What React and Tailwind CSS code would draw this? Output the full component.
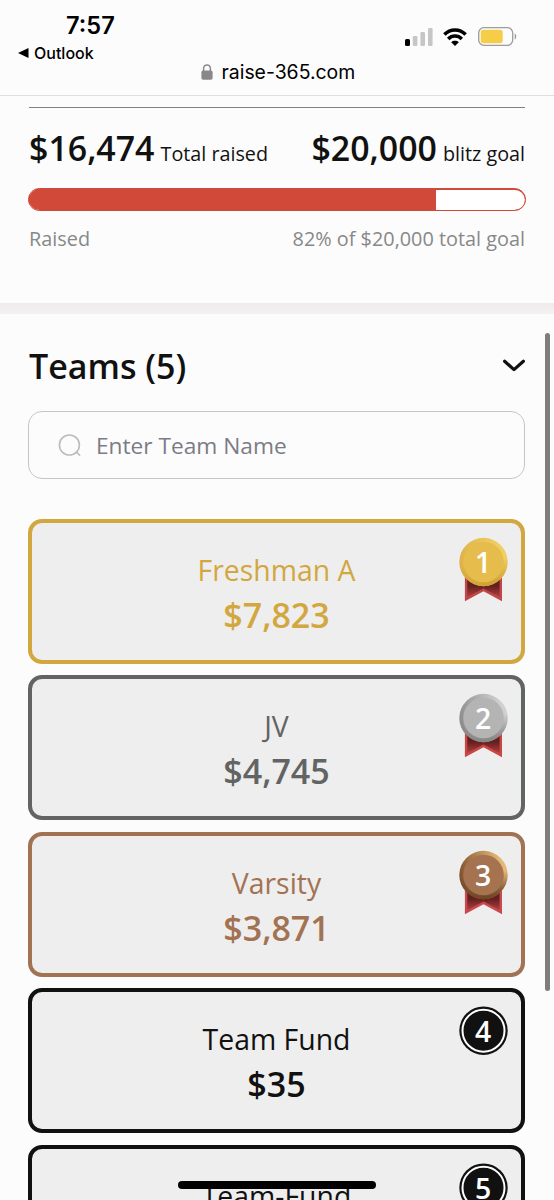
import clsx from "clsx";

const TEAMS = [
  { rank: 1, name: "Freshman A", amount: 7823 },
  { rank: 2, name: "JV", amount: 4745 },
  { rank: 3, name: "Varsity", amount: 3871 },
  { rank: 4, name: "Team Fund", amount: 35 },
  { rank: 5, name: "Team-Fund", amount: 0 }
];

const CARD_COLORS = {
  1: "border-[#d2a73f] text-[#d2a73f]",
  2: "border-[#626463] text-[#626463]",
  3: "border-[#a27352] text-[#a27352]"
};

// rim gradient + inner face for the top three
const MEDALS = {
  1: { from: "#dcb148", mid: "#f0cf62", to: "#cfa034", face: "#e6bd4c", ribbon: "#c04748" },
  2: { from: "#8b8b8b", mid: "#d0d0d0", to: "#858585", face: "#b4b4b4", ribbon: "#cb4544" },
  3: { from: "#7c4f2c", mid: "#e5b878", to: "#6a4022", face: "#a57350", ribbon: "#c84a50" }
};

const money = (n) => "$" + n.toLocaleString("en-US");

/* STATUS ICONS */
function Signal() {
  return (
    <svg width="28" height="18" viewBox="0 0 28 18">
      <rect x="0" y="11" width="5" height="7" rx="1.5" fill="#000" />
      <rect x="7.8" y="8" width="4.6" height="10" rx="1.3" fill="#c6c6c6" />
      <rect x="15.4" y="4" width="4.6" height="14" rx="1.3" fill="#c6c6c6" />
      <rect x="23" y="0" width="4.6" height="18" rx="1.3" fill="#c6c6c6" />
    </svg>
  );
}

function Wifi() {
  return (
    <svg width="24" height="18" viewBox="0 0 24 18" fill="none" stroke="#000" strokeWidth="3.5">
      <path d="M1.4 6.5C7.2 .4 16.8 .4 22.6 6.5" />
      <path d="M5.2 10.9C9 7.1 15 7.1 18.8 10.9" />
      <path d="M8.2 14.2C10.3 12.3 13.7 12.3 15.8 14.2L12 18Z" fill="#000" stroke="none" />
    </svg>
  );
}

function Battery() {
  return (
    <svg width="39" height="19" viewBox="0 0 39 19">
      <rect x=".7" y=".7" width="34" height="17.6" rx="5.2" fill="none" stroke="#9c9ca0" strokeWidth="1.3" />
      <rect x="2.7" y="2.8" width="22" height="13.4" rx="2.6" fill="#f5cd46" />
      <path d="M36.7 6.5C38.8 7.5 38.8 11.5 36.7 12.5Z" fill="#9c9ca0" />
    </svg>
  );
}

function Lock() {
  return (
    <svg width="12" height="16" viewBox="0 0 12 16">
      <path d="M2.6 7V4.5C2.6 -.3 9.4 -.3 9.4 4.5V7" fill="none" stroke="#88888a" strokeWidth="1.5" />
      <rect x=".4" y="6.5" width="11.2" height="9.2" rx="1.7" fill="#88888a" />
    </svg>
  );
}

/* RANK BADGE */
function Badge({ rank }) {
  const medal = MEDALS[rank];
  const id = "rim" + rank;

  return (
    <div className="absolute top-[14px] right-[13.5px] w-[49px] h-[66px] flex justify-center">
      <svg className="absolute inset-0" width="49" height="66" viewBox="0 0 49 66">
        {medal ? (
          <>
            <defs>
              <linearGradient id={id} x1="0" y1=".6" x2="1" y2=".35">
                <stop offset="0" stopColor={medal.from} />
                <stop offset=".9" stopColor={medal.mid} />
                <stop offset="1" stopColor={medal.mid} />
              </linearGradient>
              <linearGradient id={id + "shade"} x1=".4" y1="0" x2=".6" y2="1">
                <stop offset=".5" stopColor={medal.to} stopOpacity="0" />
                <stop offset="1" stopColor={medal.to} />
              </linearGradient>
              <linearGradient id={id + "ribbon"} x1="0" y1="0" x2="0" y2="1">
                <stop offset=".5" stopColor="#64201f" />
                <stop offset="1" stopColor="#b43d3e" />
              </linearGradient>
            </defs>
            <path d="M5.9 38H43V64.3L24.5 54.2L5.9 64.3Z" fill={medal.ribbon} />
            <path d="M8.3 38H40.6V60L24.5 51.6L8.3 60Z" fill={"url(#" + id + "ribbon)"} />
            <circle cx="24.5" cy="25" r="24.2" fill={"url(#" + id + ")"} />
            <circle cx="24.5" cy="25" r="24.2" fill={"url(#" + id + "shade)"} />
            <circle cx="24.5" cy="25" r="20.3" fill={medal.face} />
          </>
        ) : (
          <>
            <circle cx="24.5" cy="24.7" r="24.2" fill="#111" />
            <circle cx="24.5" cy="24.7" r="21" fill="none" stroke="#fff" strokeWidth="2" />
          </>
        )}
      </svg>
      <span className="relative text-[28.4px] leading-[51px] font-[570] text-white">{rank}</span>
    </div>
  );
}

function TeamCard({ team }) {
  return (
    <div
      className={clsx(
        "relative h-[145px] shrink-0 rounded-[14px] border-4 bg-[#eeeeee] pt-[27px] text-center",
        CARD_COLORS[team.rank] || "border-[#111111] text-[#111111]"
      )}
    >
      <div className="text-[28.4px] leading-10">{team.name}</div>
      <div className="mt-[2px] text-[34px] leading-[46px] font-[570]">{money(team.amount)}</div>
      <Badge rank={team.rank} />
    </div>
  );
}

export default function App() {
  return (
    <div className="relative w-[554px] h-[1200px] overflow-hidden bg-[#fcfcfc] text-[#111111] font-['Open_Sans',sans-serif]">

      {/* BROWSER HEADER */}
      <header className="h-[96px] border-b-[1.5px] border-[#dfdfdf] font-['Inter',sans-serif] text-black">
        <div className="flex justify-between h-[62px] pl-[18px] pr-[37px]">
          <div>
            <div className="pl-12 pt-3 text-[23.6px] leading-7 font-semibold">7:57</div>
            <div className="flex items-center gap-[5px] pt-[3px] text-[16px] leading-5 font-[450]">
              <svg width="11" height="10" viewBox="0 0 11 10">
                <path d="M0 5L10.5 0V10Z" />
              </svg>
              Outlook
            </div>
          </div>
          <div className="flex items-center pt-[11px]">
            <Signal />
            <div className="ml-[10px]"><Wifi /></div>
            <div className="ml-[11px]"><Battery /></div>
          </div>
        </div>
        <div className="flex items-center gap-[8.5px] pl-[201px] h-5 text-[19.4px] leading-5">
          <Lock />
          raise-365.com
        </div>
      </header>

      {/* TOTALS */}
      <section className="h-[207px] px-[29px] pt-[11px]">
        <div className="w-[496px] h-px bg-[#808080]" />
        <div className="flex justify-between pt-[19px] leading-[42px]">
          <div className="flex items-baseline gap-[6px]">
            <span className="text-[33.9px] font-[570]">$16,474</span>
            <span className="text-[19.75px]">Total raised</span>
          </div>
          <div className="flex items-baseline gap-[6px]">
            <span className="text-[33.9px] font-[570]">$20,000</span>
            <span className="text-[19.75px]">blitz goal</span>
          </div>
        </div>
        <div className="-ml-px mt-[13px] w-[498px] h-[23px] rounded-full border-[1.5px] border-[#d14a39] bg-[#d14a39] p-[0.5px] overflow-hidden">
          <div className="h-full rounded-r-full bg-white">
            <div className="h-full bg-[#d14a39]" style={{ width: (16474 / 20000) * 100 - 0.2 + "%" }} />
          </div>
        </div>
        <div className="flex justify-between pt-[14px] text-[19.85px] leading-[28px] text-[#888888]">
          <span>Raised</span>
          <span>82% of $20,000 total goal</span>
        </div>
      </section>

      <div className="h-[11px] bg-gradient-to-b from-[#efebec] to-[#f3f1f2]" />

      {/* TEAMS */}
      <section className="px-[29px] pt-[31px]">
        <div className="flex items-center justify-between h-[42px]">
          <h2 className="text-[34px] leading-[42px] font-[570]">Teams (5)</h2>
          <svg width="22" height="14" viewBox="0 0 22 14" fill="none" stroke="#111" strokeWidth="3.2" strokeLinecap="round" strokeLinejoin="round">
            <path d="M1.6 2.2L11 10.6L20.4 2.2" />
          </svg>
        </div>

        <label className="-ml-px mt-[24px] flex items-center gap-[14px] w-[497px] h-[68px] rounded-[14px] border border-[#c6c6c6] pl-[29px] pt-[2px]">
          <svg width="24" height="24" viewBox="0 0 24 24" fill="none" stroke="#bcbcbc" strokeWidth="1.6" strokeLinecap="round">
            <circle cx="11.4" cy="11" r="10" />
            <path d="M18.5 18.1L21.7 21.3" />
          </svg>
          <input
            className="w-80 pt-px text-[22.7px] outline-none placeholder:text-[#7b7b86]"
            placeholder="Enter Team Name"
          />
        </label>

        <div className="-ml-px mt-10 w-[497px] flex flex-col gap-[11.4px]">
          {TEAMS.map(team => (
            <TeamCard key={team.rank} team={team} />
          ))}
        </div>
      </section>

      {/* SCROLLBAR */}
      <div className="absolute left-[545px] top-[333px] w-[5px] h-[658px] rounded-full bg-[#7d7d7d]" />

      {/* HOME INDICATOR */}
      <div className="absolute left-[178px] top-[1181px] w-[198px] h-[7.5px] rounded-full bg-black" />
    </div>
  );
}
